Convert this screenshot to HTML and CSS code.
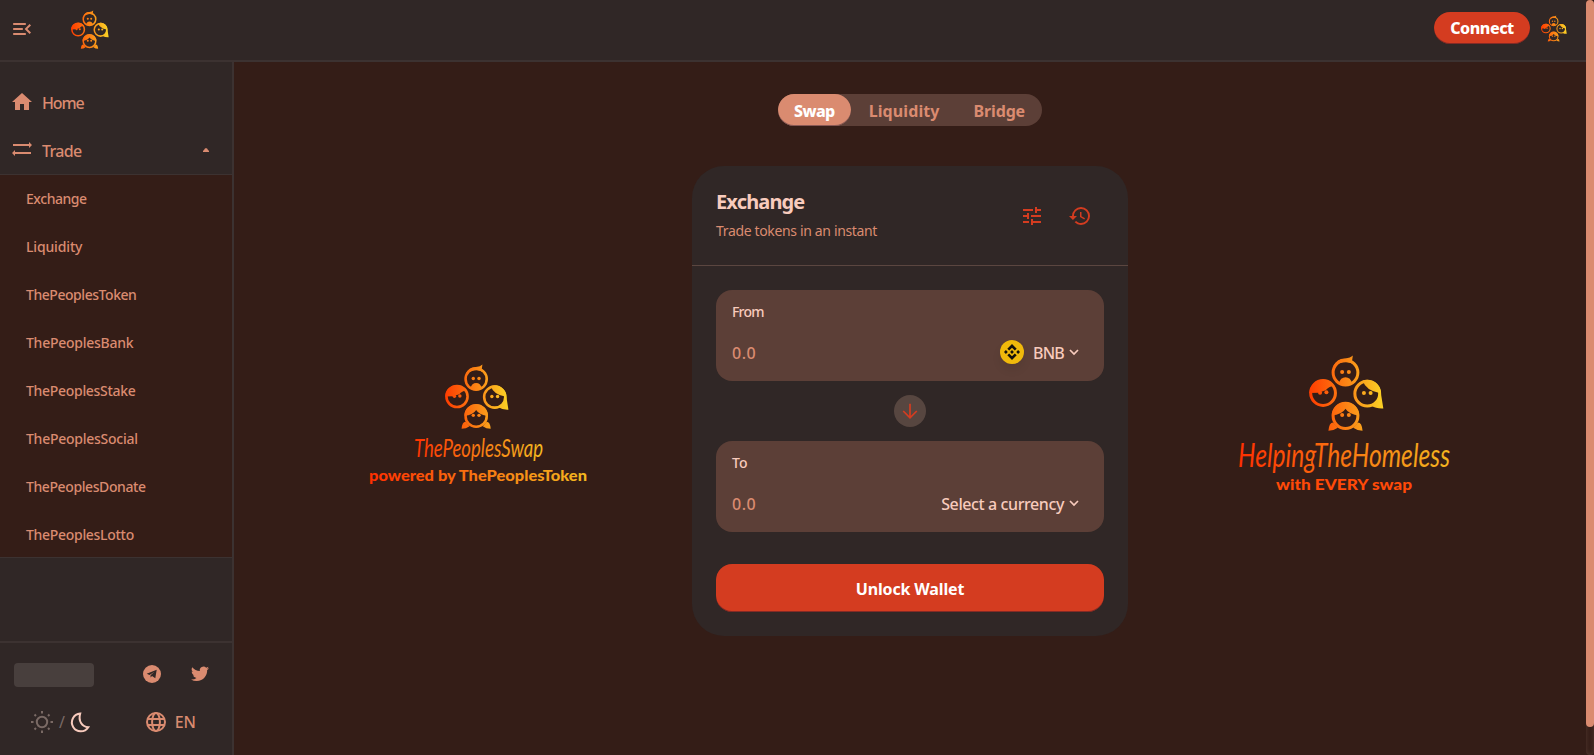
FILE: index.html
```html
<!DOCTYPE html>
<html lang="en">
<head>
<meta charset="utf-8">
<title>ThePeoplesSwap</title>
<link rel="stylesheet" href="styles.css">
</head>
<body>
<svg class="defs" width="0" height="0" aria-hidden="true">
  <defs>
    <linearGradient id="flame" gradientUnits="userSpaceOnUse" x1="0" y1="30" x2="218" y2="20">
      <stop offset="0" stop-color="#ff3000"/><stop offset=".5" stop-color="#f87a12"/><stop offset="1" stop-color="#f3bb20"/>
    </linearGradient>
    <linearGradient id="flame-short" gradientUnits="userSpaceOnUse" x1="44" y1="0" x2="174" y2="0">
      <stop offset="0" stop-color="#ff3000"/><stop offset=".5" stop-color="#f87a12"/><stop offset="1" stop-color="#f3bb20"/>
    </linearGradient>
    <linearGradient id="family-fill" gradientUnits="userSpaceOnUse" x1="0" y1="110" x2="224" y2="100">
      <stop offset="0" stop-color="#ff3c00"/><stop offset=".5" stop-color="#fb8415"/><stop offset="1" stop-color="#fbd526"/>
    </linearGradient>
    <symbol id="family" viewBox="0 0 224 226">
      <g fill="none" stroke="url(#family-fill)" stroke-width="9">
        <circle cx="109" cy="52" r="37"/><circle cx="42" cy="113" r="37"/>
        <circle cx="174" cy="115" r="37"/><circle cx="109" cy="182" r="37"/>
      </g>
      <g fill="url(#family-fill)">
        <path d="M72 34Q84 9 108 10Q124 8 131 1L128 21L138 30Q110 10 72 34Z"/>
        <path d="M89 84Q94 66 109 66Q124 66 129 84Q109 93 89 84Z"/>
        <path d="M1 113A41 41 0 0 1 77 93Q62 90 50 105L28 112Z"/>
        <path d="M160 76A41 41 0 0 1 215 115L222 159Q200 160 187 151Q207 140 210 113Q170 106 160 76Z"/>
        <path d="M68 180A41 41 0 0 1 150 180Q120 178 109 160Q98 178 68 180Z"/>
        <path d="M58 226Q60 201 72 201L86 217Q74 226 58 226ZM160 226Q158 201 146 201L132 217Q144 226 160 226Z"/>
        <g><circle cx="99" cy="50" r="6"/><circle cx="119" cy="50" r="6"/><circle cx="33" cy="112" r="6"/><circle cx="52" cy="111" r="6"/><circle cx="164" cy="113" r="6"/><circle cx="184" cy="113" r="6"/><circle cx="99" cy="179" r="6"/><circle cx="119" cy="179" r="6"/></g>
      </g>
    </symbol>
  </defs>
</svg>

<header class="topbar">
  <div class="brand">
    <svg class="ico24" viewBox="0 0 24 24"><path d="M4 18h11c.55 0 1-.45 1-1s-.45-1-1-1H4c-.55 0-1 .45-1 1s.45 1 1 1zM3 12c0 .55.45 1 1 1h8c.55 0 1-.45 1-1s-.45-1-1-1H4c-.55 0-1 .45-1 1zm0-5c0 .55.45 1 1 1h11c.55 0 1-.45 1-1s-.45-1-1-1H4c-.55 0-1 .45-1 1zm18 8.600L17.400 12 21 8.400 19.600 7l-5 5 5 5z"/></svg>
    <svg class="brand-logo"><use href="#family"/></svg>
  </div>
  <div class="account">
    <button class="connect"><span class="t-connect">Connect</span></button>
    <svg class="avatar"><use href="#family"/></svg>
  </div>
</header>

<div class="shell">
  <nav class="sidebar">
    <div class="menu">
      <a class="item"><svg class="ico24" viewBox="0 0 24 24"><path d="M10 20v-6h4v6h5v-8h3L12 3 2 12h3v8z"/></svg><span class="t-home">Home</span></a>
      <a class="item"><svg class="ico24" viewBox="0 0 24 24"><path d="M19 10l3-3-3-3v2H3v2h16zM5 12l-3 3 3 3v-2h16v-2H5z"/></svg><span class="t-trade">Trade</span><svg class="caret" viewBox="0 0 6 4"><path d="M0 4V3L2.200.500Q3-.300 3.800.500L6 3V4Z"/></svg></a>
      <div class="sub">
        <a class="t-s1">Exchange</a><a class="t-s2">Liquidity</a><a class="t-s3">ThePeoplesToken</a><a class="t-s4">ThePeoplesBank</a><a class="t-s5">ThePeoplesStake</a><a class="t-s6">ThePeoplesSocial</a><a class="t-s7">ThePeoplesDonate</a><a class="t-s8">ThePeoplesLotto</a>
      </div>
    </div>
    <footer class="side-foot">
      <div class="foot-row">
        <span class="skeleton"></span>
        <div class="social">
          <svg class="ico18" viewBox="0 0 18 18"><circle cx="9" cy="9" r="9"/><path class="plane" d="M3.700 8.800L13.700 4.800L12.300 13.200L9 11L7.600 12.600L7.500 10.200L11.500 6.700L6.500 9.900Z"/></svg>
          <svg class="ico24" viewBox="0 0 24 24"><path d="M21 6.200c-.66.3-1.370.5-2.120.58.760-.46 1.350-1.180 1.620-2.030-.71.420-1.500.730-2.340.890a3.690 3.690 0 0 0-6.290 3.370C8.800 8.860 6.080 7.390 4.260 5.150a3.690 3.690 0 0 0 1.140 4.930c-.6-.02-1.170-.19-1.670-.46v.05c0 1.790 1.270 3.280 2.960 3.620-.54.150-1.120.170-1.670.060.470 1.470 1.840 2.540 3.450 2.570A7.410 7.410 0 0 1 3 17.450a10.450 10.450 0 0 0 5.660 1.660c6.860 0 10.740-5.790 10.500-10.990.72-.52 1.350-1.180 1.840-1.920z"/></svg>
        </div>
      </div>
      <div class="foot-row">
        <div class="themes">
          <svg class="sun" viewBox="0 0 24 24"><circle cx="12" cy="12" r="5.200"/><path d="M12 1v2.500M12 20.500V23M1 12h2.500M20.500 12H23M4.500 4.500l1.500 1.500M18 18l1.500 1.500M4.500 19.500L6 18M18 6l1.500-1.500"/></svg>
          <span class="slash">/</span>
          <svg class="moon" viewBox="0 0 20 20"><path d="M10.200 1.500A8.900 8.900 0 1 0 18.300 15.200C12 14.800 8 9 10.200 1.500Z"/></svg>
        </div>
        <div class="lang">
          <svg class="globe" viewBox="0 0 20 20"><circle cx="10" cy="10" r="9"/><ellipse cx="10" cy="10" rx="3.900" ry="9"/><path d="M1.800 7H18.200M1.800 13H18.200"/></svg>
          <span class="t-en">EN</span>
        </div>
      </div>
    </footer>
  </nav>

  <main class="stage">
    <div class="side-art">
      <svg class="art-left" viewBox="0 0 218 122">
        <svg x="76" y="-1" width="64" height="65"><use href="#family"/></svg>
        <text class="script" x="45" y="92" font-size="25" textLength="129" lengthAdjust="spacingAndGlyphs" fill="url(#flame-short)">ThePeoplesSwap</text>
        <text class="round" x="0" y="116" font-size="15" textLength="218" lengthAdjust="spacingAndGlyphs" fill="url(#flame)">powered by ThePeoplesToken</text>
      </svg>
    </div>
    <div class="center">
      <div class="tabs"><button class="tab on"><span class="t-swap">Swap</span></button><button class="tab"><span class="t-liq">Liquidity</span></button><button class="tab"><span class="t-bri">Bridge</span></button></div>
      <section class="card">
        <div class="card-head">
          <div>
            <h2 class="t-exch">Exchange</h2>
            <p class="t-subt">Trade tokens in an instant</p>
          </div>
          <div class="tools">
            <svg class="ico24" viewBox="0 0 24 24"><path d="M3 17v2h6v-2H3zM3 5v2h10V5H3zm10 16v-2h8v-2h-8v-2h-2v6h2zM7 9v2H3v2h4v2h2V9H7zm14 4v-2H11v2h10zm-6-4h2V7h4V5h-4V3h-2v6z"/></svg>
            <svg class="ico24" viewBox="0 0 24 24"><path d="M13 3a9 9 0 0 0-9 9H1l3.890 3.890.070.140L9 12H6c0-3.870 3.130-7 7-7s7 3.130 7 7-3.130 7-7 7c-1.930 0-3.680-.79-4.940-2.060l-1.420 1.420A8.954 8.954 0 0 0 13 21a9 9 0 0 0 0-18zm-1 5v5l4.280 2.540.72-1.210-3.500-2.080V8H12z"/></svg>
          </div>
        </div>
        <div class="card-body">
          <div class="field">
            <span class="label t-from">From</span>
            <div class="line"><span class="amount">0.0</span>
              <span class="cur"><svg class="bnb" viewBox="0 0 24 24"><circle class="coin" cx="12" cy="12" r="12"/><path d="M12 4l4.700 4.700-1.900 1.900L12 7.800l-2.800 2.800-1.900-1.900zM12 20l4.700-4.700-1.900-1.900-2.800 2.800-2.800-2.800-1.900 1.900zM12 10.100l1.900 1.900-1.900 1.900-1.900-1.900zM5.900 10.100L7.800 12l-1.900 1.900L4 12zM18.100 10.100L20 12l-1.900 1.900-1.900-1.900z"/></svg><span class="t-bnb">BNB</span><svg class="chev" viewBox="0 0 10 6"><path d="M1 1l4 4 4-4"/></svg></span>
            </div>
          </div>
          <div class="switch"><svg viewBox="0 0 16 16"><path d="M8 .8V15M1.200 8L8 14.800 14.800 8"/></svg></div>
          <div class="field">
            <span class="label t-to">To</span>
            <div class="line"><span class="amount">0.0</span>
              <span class="cur"><span class="t-sel">Select a currency</span><svg class="chev" viewBox="0 0 10 6"><path d="M1 1l4 4 4-4"/></svg></span>
            </div>
          </div>
          <button class="unlock"><span class="t-unl">Unlock Wallet</span></button>
        </div>
      </section>
    </div>
    <div class="side-art">
      <svg class="art-right" viewBox="0 0 214 140">
        <svg x="72" y="-1" width="75" height="76"><use href="#family"/></svg>
        <text class="script" x="1" y="111" font-size="32" textLength="212" lengthAdjust="spacingAndGlyphs" fill="url(#flame)">HelpingTheHomeless</text>
        <text class="round" x="39" y="134" font-size="15.500" textLength="136" lengthAdjust="spacingAndGlyphs" fill="#ff4a08">with EVERY swap</text>
      </svg>
    </div>
  </main>
</div>
<div class="scroll"><div class="thumb"></div></div>
</body>
</html>
```
FILE: styles.css
```css
* { box-sizing: border-box; }
body {
  margin: 0;
  height: 755px;
  overflow: hidden;
  background: #341d17;
  color: #da8b70;
  font: 400 16px/1.5 "Noto Sans", "Open Sans", sans-serif;
  display: grid;
  grid-template: 62px 693px / 1586px 8px;
}
button { font: inherit; border: 0; padding: 0; color: inherit; }
span, a, h2, p { white-space: nowrap; }
svg { display: block; fill: currentColor; flex: none; overflow: visible; }
.defs { position: absolute; }
.ico24 { width: 24px; height: 24px; }
.ico18 { width: 18px; height: 18px; }

.topbar {
  background: #302726;
  border-bottom: 2px solid #3c3231;
  display: flex;
  justify-content: space-between;
  padding: 0 19px 0 10px;
}
.brand { display: flex; gap: 37px; padding-top: 9.500px; }
.brand .ico24 { margin-top: 7.500px; }
.brand-logo { width: 38px; height: 39px; }
.account { display: flex; gap: 11px; padding-top: 12px; }
.connect {
  width: 96px;
  height: 32px;
  border-radius: 16px;
  background: #d43c20;
  box-shadow: inset 0 -1px 0 rgba(14, 14, 44, .4);
  color: #fff;
  font-weight: 800;
}
.avatar { width: 26px; height: 27px; margin-top: 3px; }

.shell { display: grid; grid-template-columns: 234px 1352px; grid-row: 2; }
.sidebar {
  background: #302726;
  border-right: 2px solid #3c3231;
  display: flex;
  flex-direction: column;
  justify-content: space-between;
}
.menu { padding-top: 16px; }
.item { display: flex; align-items: center; gap: 8px; height: 48px; padding: 0 23px 0 10px; font-weight: 500; }
.item span { padding-top: 1px; }
.caret { width: 6px; height: 4px; margin-left: auto; }
.sub {
  background: #341d17;
  box-shadow: inset 0 1px 0 #3c3231, inset 0 -1px 0 #3c3231;
  display: flex;
  flex-direction: column;
  font-size: 14px;
  font-weight: 500;
}
.sub a { height: 48px; line-height: 49px; padding-left: 26px; }
.side-foot { height: 114px; border-top: 2px solid #3c3231; padding: 18px 20px 0 14px; }
.foot-row { display: flex; justify-content: space-between; align-items: center; height: 48px; }
.foot-row:first-child { height: 28px; margin-bottom: 9px; }
.skeleton { width: 80px; height: 24px; margin-top: -1px; border-radius: 4px; background: #483f3d; }
.social { display: flex; align-items: center; gap: 27px; margin-top: -2px; }
.plane { fill: #302726; }
.themes { display: flex; align-items: center; gap: 5px; padding-left: 16px; }
.sun { width: 24px; height: 24px; fill: none; stroke: #7a6a65; stroke-width: 2; }
.slash { color: #7a6a65; }
.moon { width: 20px; height: 20px; fill: none; stroke: #f8cbbd; stroke-width: 2; }
.lang { display: flex; align-items: center; gap: 9px; padding-right: 16px; font-weight: 500; }
.globe { width: 20px; height: 20px; fill: none; stroke: #da8b70; stroke-width: 2; }

.stage { display: grid; grid-template-columns: 458px 436px 458px; }
.side-art { padding-top: 303px; }
.art-left { width: 218px; height: 122px; margin-left: 135px; }
.side-art:last-child { padding-top: 294px; }
.art-right { width: 214px; height: 140px; margin-left: 109px; }
.script { font-family: Lato, sans-serif; font-style: italic; }
.round { font-family: Lato, sans-serif; font-weight: 900; }

.tabs {
  display: flex;
  gap: 2px;
  width: 264px;
  height: 32px;
  margin: 32px auto 40px;
  border-radius: 16px;
  background: #5c3f37;
}
.tab { background: none; padding: 1px 16px 0; font-weight: 700; }
.on { background: #da8b70; color: #fff; border-radius: 16px; box-shadow: inset 0 -1px 0 rgba(14, 14, 44, .4); font-weight: 800; }
.card { height: 470px; border-radius: 32px; background: #302726; }
.card-head { height: 100px; border-bottom: 1px solid #5b4640; padding: 20px 36px 0 24px; display: flex; justify-content: space-between; }
h2 { margin: 0; font-size: 20px; line-height: 31px; font-weight: 700; color: #f8cbbd; }
p { margin: 4px 0 0; font-size: 14px; line-height: 20px; }
.tools { display: flex; gap: 24px; padding-top: 18px; color: #d43c20; }
.card-body { padding: 24px; }
.field { height: 91px; border-radius: 16px; background: #5c3f37; padding: 12px 24px 0 16px; }
.label { display: block; height: 21px; font-size: 14px; line-height: 20px; font-weight: 500; color: #f8cbbd; }
.line { display: flex; justify-content: space-between; align-items: center; height: 24px; margin-top: 17px; font-weight: 500; }
.line span span, .amount { padding-top: 1px; }
.cur { display: flex; align-items: center; color: #f8cbbd; }
.bnb { width: 24px; height: 24px; margin-right: 9px; fill: #15110c; border-radius: 50%; box-shadow: 0 6px 10px rgba(0, 0, 0, .075); }
.coin { fill: #f0b90b; }
.chev { width: 10px; height: 6px; margin: 0 1px 0 5px; fill: none; stroke: #f8cbbd; stroke-width: 1.700; }
.switch { width: 32px; height: 32px; border-radius: 50%; background: #574640; margin: 14px auto; padding: 8px; color: #d43c20; }
.switch svg { width: 16px; height: 16px; fill: none; stroke: currentColor; stroke-width: 1.700; }
.unlock {
  display: block;
  width: 388px;
  height: 48px;
  margin-top: 32px;
  padding-top: 1px;
  border-radius: 16px;
  background: #d43c20;
  box-shadow: inset 0 -1px 0 rgba(14, 14, 44, .4);
  color: #fff;
  font-weight: 700;
}
.scroll { grid-column: 2; grid-row: 1 / 3; background: #341d17; border-radius: 10px; box-shadow: inset 0 0 5px #553a31; }
.thumb { height: 727px; border-radius: 8px; background: #da8b70; }

/* per-label tracking */
.t-home { letter-spacing: -1.100px; }
.t-trade { letter-spacing: -.650px; }
.t-s1, .t-s3 { letter-spacing: -.450px; }
.t-s2 { letter-spacing: -.150px; }
.t-s4, .t-s6 { letter-spacing: -.250px; }
.t-s5, .t-s8 { letter-spacing: -.300px; }
.t-s7 { letter-spacing: -.400px; }
.t-connect { letter-spacing: -.450px; }
.t-swap { letter-spacing: -.600px; }
.t-liq { letter-spacing: .100px; }
.t-bri { letter-spacing: -.150px; }
.t-exch { letter-spacing: -.850px; }
.t-subt { letter-spacing: -.350px; }
.t-from { letter-spacing: -.800px; }
.amount { letter-spacing: .500px; }
.t-bnb { letter-spacing: -.800px; }
.t-sel { letter-spacing: -.400px; }
.t-unl { letter-spacing: -.150px; }
```
